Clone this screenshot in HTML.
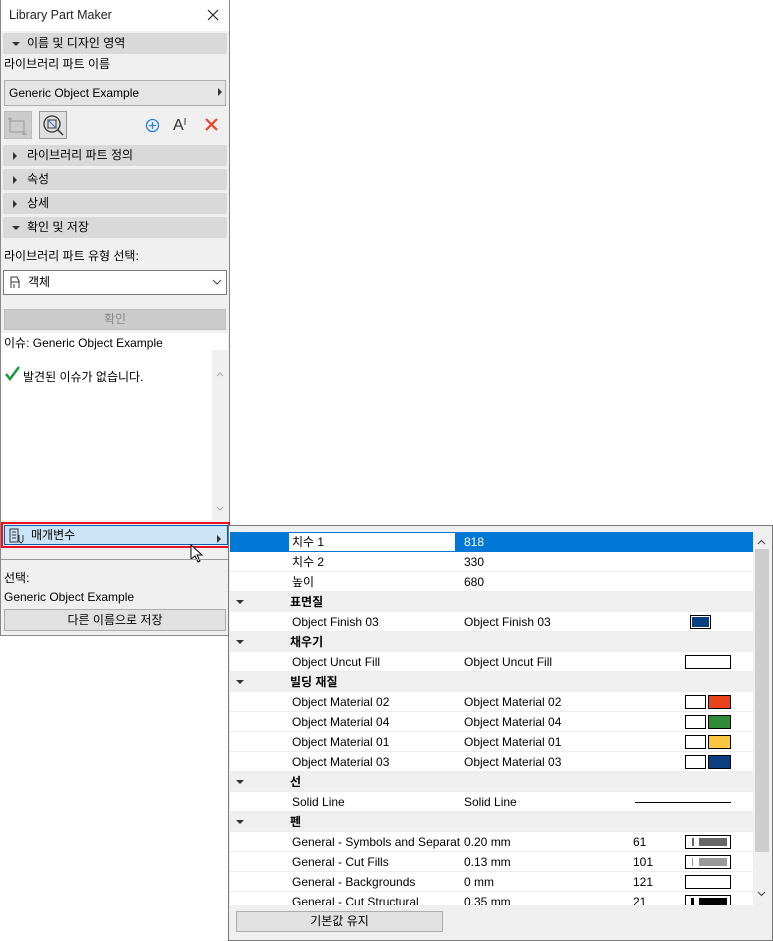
<!DOCTYPE html>
<html><head><meta charset="utf-8"><style>
*{box-sizing:border-box;margin:0;padding:0}
body{width:773px;height:941px;background:#fff;position:relative;overflow:hidden;font-family:"Liberation Sans","Noto Sans CJK KR",sans-serif;font-size:12px;color:#000}
.a{position:absolute}
.hdr{position:absolute;left:3px;width:224px;height:21px;background:#d9d9d9;border-radius:2px;font-size:12px;line-height:21px;padding-left:24px}
.tri-d{position:absolute;left:9px;top:9px;border-left:4px solid transparent;border-right:4px solid transparent;border-top:4px solid #333}
.tri-r{position:absolute;left:10px;top:7px;border-top:4px solid transparent;border-bottom:4px solid transparent;border-left:4px solid #333}
.row{position:absolute;left:230px;width:523px;height:20px;line-height:20px;border-bottom:1px solid #ececec;background:#fff}
.row span{position:absolute}
.grp{background:#efefef;font-weight:bold}
.sw{position:absolute;top:3px;height:14px;border:1px solid #000}
</style></head><body>
<!-- left panel -->
<div class="a" style="left:0;top:0;width:230px;height:636px;background:#f0f0f0;border:1px solid #888;border-top:none"></div>
<div class="a" style="left:1px;top:0;width:228px;height:31px;background:#fff"></div>
<div class="a" style="left:9px;top:8px;font-size:12.5px;color:#222">Library Part Maker</div>
<svg class="a" style="left:207px;top:9px" width="12" height="12"><path d="M1 1L11 11M11 1L1 11" stroke="#222" stroke-width="1.2"/></svg>
<div class="hdr" style="top:33px"><div class="tri-d"></div>이름 및 디자인 영역</div>
<div class="a" style="left:4px;top:55px">라이브러리 파트 이름</div>
<div class="a" style="left:4px;top:80px;width:222px;height:26px;background:#e5e5e5;border:1px solid #adadad;line-height:24px;padding-left:4px">Generic Object Example</div>
<div class="a" style="left:218px;top:88px;border-top:4px solid transparent;border-bottom:4px solid transparent;border-left:4px solid #333"></div>
<div class="a" style="left:4px;top:111px;width:28px;height:28px;background:#ccc;border:1px solid #bbb"></div>
<svg class="a" style="left:6px;top:113px" width="24" height="24"><path d="M4 8h14v11H4z" fill="none" stroke="#999"/><path d="M4 4v4M2 6h4M18 19v3M16 21h5" stroke="#999"/></svg>
<div class="a" style="left:39px;top:111px;width:28px;height:28px;background:#e0e0e0;border:1px solid #999"></div>
<svg class="a" style="left:41px;top:113px" width="24" height="24"><circle cx="11" cy="11" r="8" fill="none" stroke="#333" stroke-width="1.3"/><rect x="7" y="7" width="8" height="8" fill="none" stroke="#333"/><line x1="7" y1="7" x2="15" y2="15" stroke="#2a7fd5"/><line x1="17" y1="17" x2="22" y2="22" stroke="#333" stroke-width="1.5"/></svg>
<svg class="a" style="left:145px;top:118px" width="15" height="15"><circle cx="7.5" cy="7.5" r="6" fill="none" stroke="#2a7fd5" stroke-width="1.3"/><path d="M7.5 4v7M4 7.5h7" stroke="#2a7fd5" stroke-width="1.3"/></svg>
<div class="a" style="left:173px;top:117px;font-size:16px;color:#333">A<span style="font-size:10px;vertical-align:top">I</span></div>
<svg class="a" style="left:204px;top:117px" width="15" height="15"><path d="M2 2L13 13M13 2L2 13" stroke="#e8452c" stroke-width="2.2"/></svg>
<div class="hdr" style="top:145px"><div class="tri-r"></div>라이브러리 파트 정의</div>
<div class="hdr" style="top:169px"><div class="tri-r"></div>속성</div>
<div class="hdr" style="top:193px"><div class="tri-r"></div>상세</div>
<div class="hdr" style="top:217px"><div class="tri-d"></div>확인 및 저장</div>
<div class="a" style="left:4px;top:247px">라이브러리 파트 유형 선택:</div>
<div class="a" style="left:3px;top:270px;width:224px;height:25px;background:#fff;border:1px solid #7a7a7a;line-height:23px;padding-left:24px">객체</div>
<svg class="a" style="left:8px;top:274px" width="14" height="16"><path d="M3 14V3h6l2 4v7M3 8h8M6 14V10" fill="none" stroke="#333"/></svg>
<svg class="a" style="left:212px;top:279px" width="10" height="6"><path d="M1 1l4 4 4-4" fill="none" stroke="#444"/></svg>
<div class="a" style="left:4px;top:309px;width:222px;height:21px;background:#ccc;border:1px solid #bfbfbf;color:#888;text-align:center;line-height:19px">확인</div>
<div class="a" style="left:1px;top:333px;width:227px;height:187px;background:#fff"></div>
<div class="a" style="left:212px;top:350px;width:16px;height:170px;background:#f0f0f0"></div>
<svg class="a" style="left:216px;top:372px" width="8" height="5"><path d="M1 4l3-3 3 3" fill="none" stroke="#aaa"/></svg>
<svg class="a" style="left:216px;top:506px" width="8" height="5"><path d="M1 1l3 3 3-3" fill="none" stroke="#aaa"/></svg>
<div class="a" style="left:4px;top:334px">이슈: Generic Object Example</div>
<svg class="a" style="left:5px;top:366px" width="15" height="15"><path d="M1 8l4 5L14 1" fill="none" stroke="#1a9a3a" stroke-width="2.5"/></svg>
<div class="a" style="left:23px;top:368px">발견된 이슈가 없습니다.</div>
<div class="a" style="left:1px;top:522px;width:229px;height:26px;border:2px solid #e81123"></div>
<div class="a" style="left:4px;top:525px;width:224px;height:20px;background:#cce4f7;border:1px solid #0b5aa8;line-height:18px;padding-left:26px">매개변수</div>
<svg class="a" style="left:8px;top:528px" width="16" height="16"><path d="M2 1h8v13H2zM4 4h4M4 7h4M4 10h4M11 7v6l2 2 2-2V7" fill="none" stroke="#333"/></svg>
<div class="a" style="left:217px;top:535px;border-top:4px solid transparent;border-bottom:4px solid transparent;border-left:4px solid #333"></div>
<svg class="a" style="left:190px;top:544px" width="14" height="20"><path d="M1 1v14l4-3 3 6 2-1-3-6h5z" fill="#fff" stroke="#000"/></svg>
<div class="a" style="left:1px;top:559px;width:228px;height:1px;background:#999"></div>
<div class="a" style="left:4px;top:569px">선택:</div>
<div class="a" style="left:4px;top:590px">Generic Object Example</div>
<div class="a" style="left:4px;top:609px;width:222px;height:22px;background:#e1e1e1;border:1px solid #adadad;text-align:center;line-height:20px">다른 이름으로 저장</div>
<!-- right panel -->
<div class="a" style="left:228px;top:525px;width:545px;height:416px;background:#f0f0f0;border:1px solid #777"></div>
<div class="a" style="left:230px;top:532px;width:523px;height:373px;background:#fff"></div>
<div class="a" style="left:753px;top:532px;width:17px;height:373px;background:#f0f0f0"></div>
<div class="a" style="left:755px;top:549px;width:14px;height:303px;background:#cdcdcd"></div>
<svg class="a" style="left:757px;top:539px" width="9" height="6"><path d="M1 5l3.5-3.5L8 5" fill="none" stroke="#555" stroke-width="1.2"/></svg>
<svg class="a" style="left:757px;top:891px" width="9" height="6"><path d="M1 1l3.5 3.5L8 1" fill="none" stroke="#555" stroke-width="1.2"/></svg>
<div class="row" style="top:532px;background:#0078d7;color:#fff;border:none"><span style="left:59px;top:1px;width:166px;height:18px;background:#fff;color:#000;padding-left:3px;line-height:18px">치수 1</span><span style="left:234px">818</span></div>
<div class="row" style="top:552px"><span style="left:62px">치수 2</span><span style="left:234px">330</span></div>
<div class="row" style="top:572px"><span style="left:62px">높이</span><span style="left:234px">680</span></div>
<div class="row grp" style="top:592px"><div class="tri-d" style="left:6px;top:8px"></div><span style="left:60px">표면질</span></div>
<div class="row" style="top:612px"><span style="left:62px">Object Finish 03</span><span style="left:234px">Object Finish 03</span><div class="sw" style="left:460px;width:21px;background:#0b3f82;box-shadow:inset 0 0 0 1px #fff"></div></div>
<div class="row grp" style="top:632px"><div class="tri-d" style="left:6px;top:8px"></div><span style="left:60px">채우기</span></div>
<div class="row" style="top:652px"><span style="left:62px">Object Uncut Fill</span><span style="left:234px">Object Uncut Fill</span><div class="sw" style="left:455px;width:46px"></div></div>
<div class="row grp" style="top:672px"><div class="tri-d" style="left:6px;top:8px"></div><span style="left:60px">빌딩 재질</span></div>
<div class="row" style="top:692px"><span style="left:62px">Object Material 02</span><span style="left:234px">Object Material 02</span><div class="sw" style="left:455px;width:21px"></div><div class="sw" style="left:478px;width:23px;background:#e8431a"></div></div>
<div class="row" style="top:712px"><span style="left:62px">Object Material 04</span><span style="left:234px">Object Material 04</span><div class="sw" style="left:455px;width:21px"></div><div class="sw" style="left:478px;width:23px;background:#2e8a35"></div></div>
<div class="row" style="top:732px"><span style="left:62px">Object Material 01</span><span style="left:234px">Object Material 01</span><div class="sw" style="left:455px;width:21px"></div><div class="sw" style="left:478px;width:23px;background:#f9c642"></div></div>
<div class="row" style="top:752px"><span style="left:62px">Object Material 03</span><span style="left:234px">Object Material 03</span><div class="sw" style="left:455px;width:21px"></div><div class="sw" style="left:478px;width:23px;background:#0b3f82"></div></div>
<div class="row grp" style="top:772px"><div class="tri-d" style="left:6px;top:8px"></div><span style="left:60px">선</span></div>
<div class="row" style="top:792px"><span style="left:62px">Solid Line</span><span style="left:234px">Solid Line</span><div class="a" style="left:405px;top:10px;width:96px;height:1px;background:#000"></div></div>
<div class="row grp" style="top:812px"><div class="tri-d" style="left:6px;top:8px"></div><span style="left:60px">펜</span></div>
<div class="row" style="top:832px"><span style="left:62px;width:168px;overflow:hidden;white-space:nowrap">General - Symbols and Separat...</span><span style="left:234px">0.20 mm</span><span style="left:403px">61</span><div class="sw" style="left:455px;width:46px"><div class="a" style="left:6px;top:2px;width:2px;height:8px;background:#666"></div><div class="a" style="left:13px;top:2px;width:28px;height:8px;background:#666"></div></div></div>
<div class="row" style="top:852px"><span style="left:62px">General - Cut Fills</span><span style="left:234px">0.13 mm</span><span style="left:403px">101</span><div class="sw" style="left:455px;width:46px"><div class="a" style="left:6px;top:2px;width:1px;height:8px;background:#999"></div><div class="a" style="left:13px;top:2px;width:28px;height:8px;background:#999"></div></div></div>
<div class="row" style="top:872px"><span style="left:62px">General - Backgrounds</span><span style="left:234px">0 mm</span><span style="left:403px">121</span><div class="sw" style="left:455px;width:46px"></div></div>
<div class="row" style="top:892px;height:13px;overflow:hidden;border:none"><span style="left:62px">General - Cut Structural</span><span style="left:234px">0.35 mm</span><span style="left:403px">21</span><div class="sw" style="left:455px;width:46px;height:12px"><div class="a" style="left:5px;top:2px;width:3px;height:9px;background:#000"></div><div class="a" style="left:13px;top:2px;width:28px;height:9px;background:#000"></div></div></div>
<div class="a" style="left:236px;top:911px;width:207px;height:21px;background:#e1e1e1;border:1px solid #adadad;text-align:center;line-height:19px">기본값 유지</div>
</body></html>
